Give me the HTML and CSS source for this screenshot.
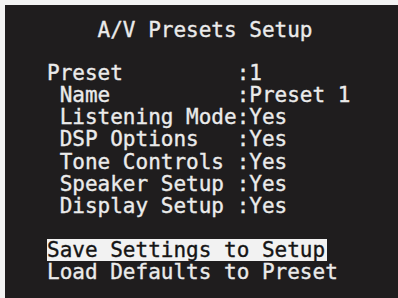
FILE: index.html
```html
<!DOCTYPE html>
<html>
<head>
<meta charset="utf-8">
<link rel="stylesheet" href="styles.css">
</head>
<body>
<div class="screen">
  <div class="title">A/V Presets Setup</div>
  <div class="table">
    <div class="label">Preset</div><div class="value">:1</div>
    <div class="label sub">Name</div><div class="value">:Preset 1</div>
    <div class="label sub">Listening Mode</div><div class="value">:Yes</div>
    <div class="label sub">DSP Options</div><div class="value">:Yes</div>
    <div class="label sub">Tone Controls</div><div class="value">:Yes</div>
    <div class="label sub">Speaker Setup</div><div class="value">:Yes</div>
    <div class="label sub">Display Setup</div><div class="value">:Yes</div>
  </div>
  <div class="actions">
    <div class="action"><span class="selected">Save Settings to Setup</span></div>
    <div class="action">Load Defaults to Preset</div>
  </div>
</div>
</body>
</html>
```
FILE: styles.css
```css
html, body {
  margin: 0;
  padding: 0;
  background: #f3f3f3;
  height: 100%;
  overflow: hidden;
}
.screen {
  margin: 5px 0 0 5px;
  height: 293px;
  background: #1f1d1e;
  color: #ebebeb;
  font-family: "DejaVu Sans Mono", monospace;
  font-size: 21px;
  line-height: 22.3px;
  padding: 13.6px 0 0 42px;
  box-sizing: border-box;
  white-space: nowrap;
  -webkit-text-stroke: 0.35px currentColor;
}
.title {
  padding-left: 4ch;
  margin-bottom: 20.7px;
}
.table {
  display: grid;
  grid-template-columns: 15ch auto;
  justify-content: start;
}
.sub {
  padding-left: 1ch;
}
.actions {
  margin-top: 21px;
}
.selected {
  display: inline-block;
  vertical-align: top;
  background: #f2f2f2;
  color: #151515;
  padding-right: 2px;
}
```
